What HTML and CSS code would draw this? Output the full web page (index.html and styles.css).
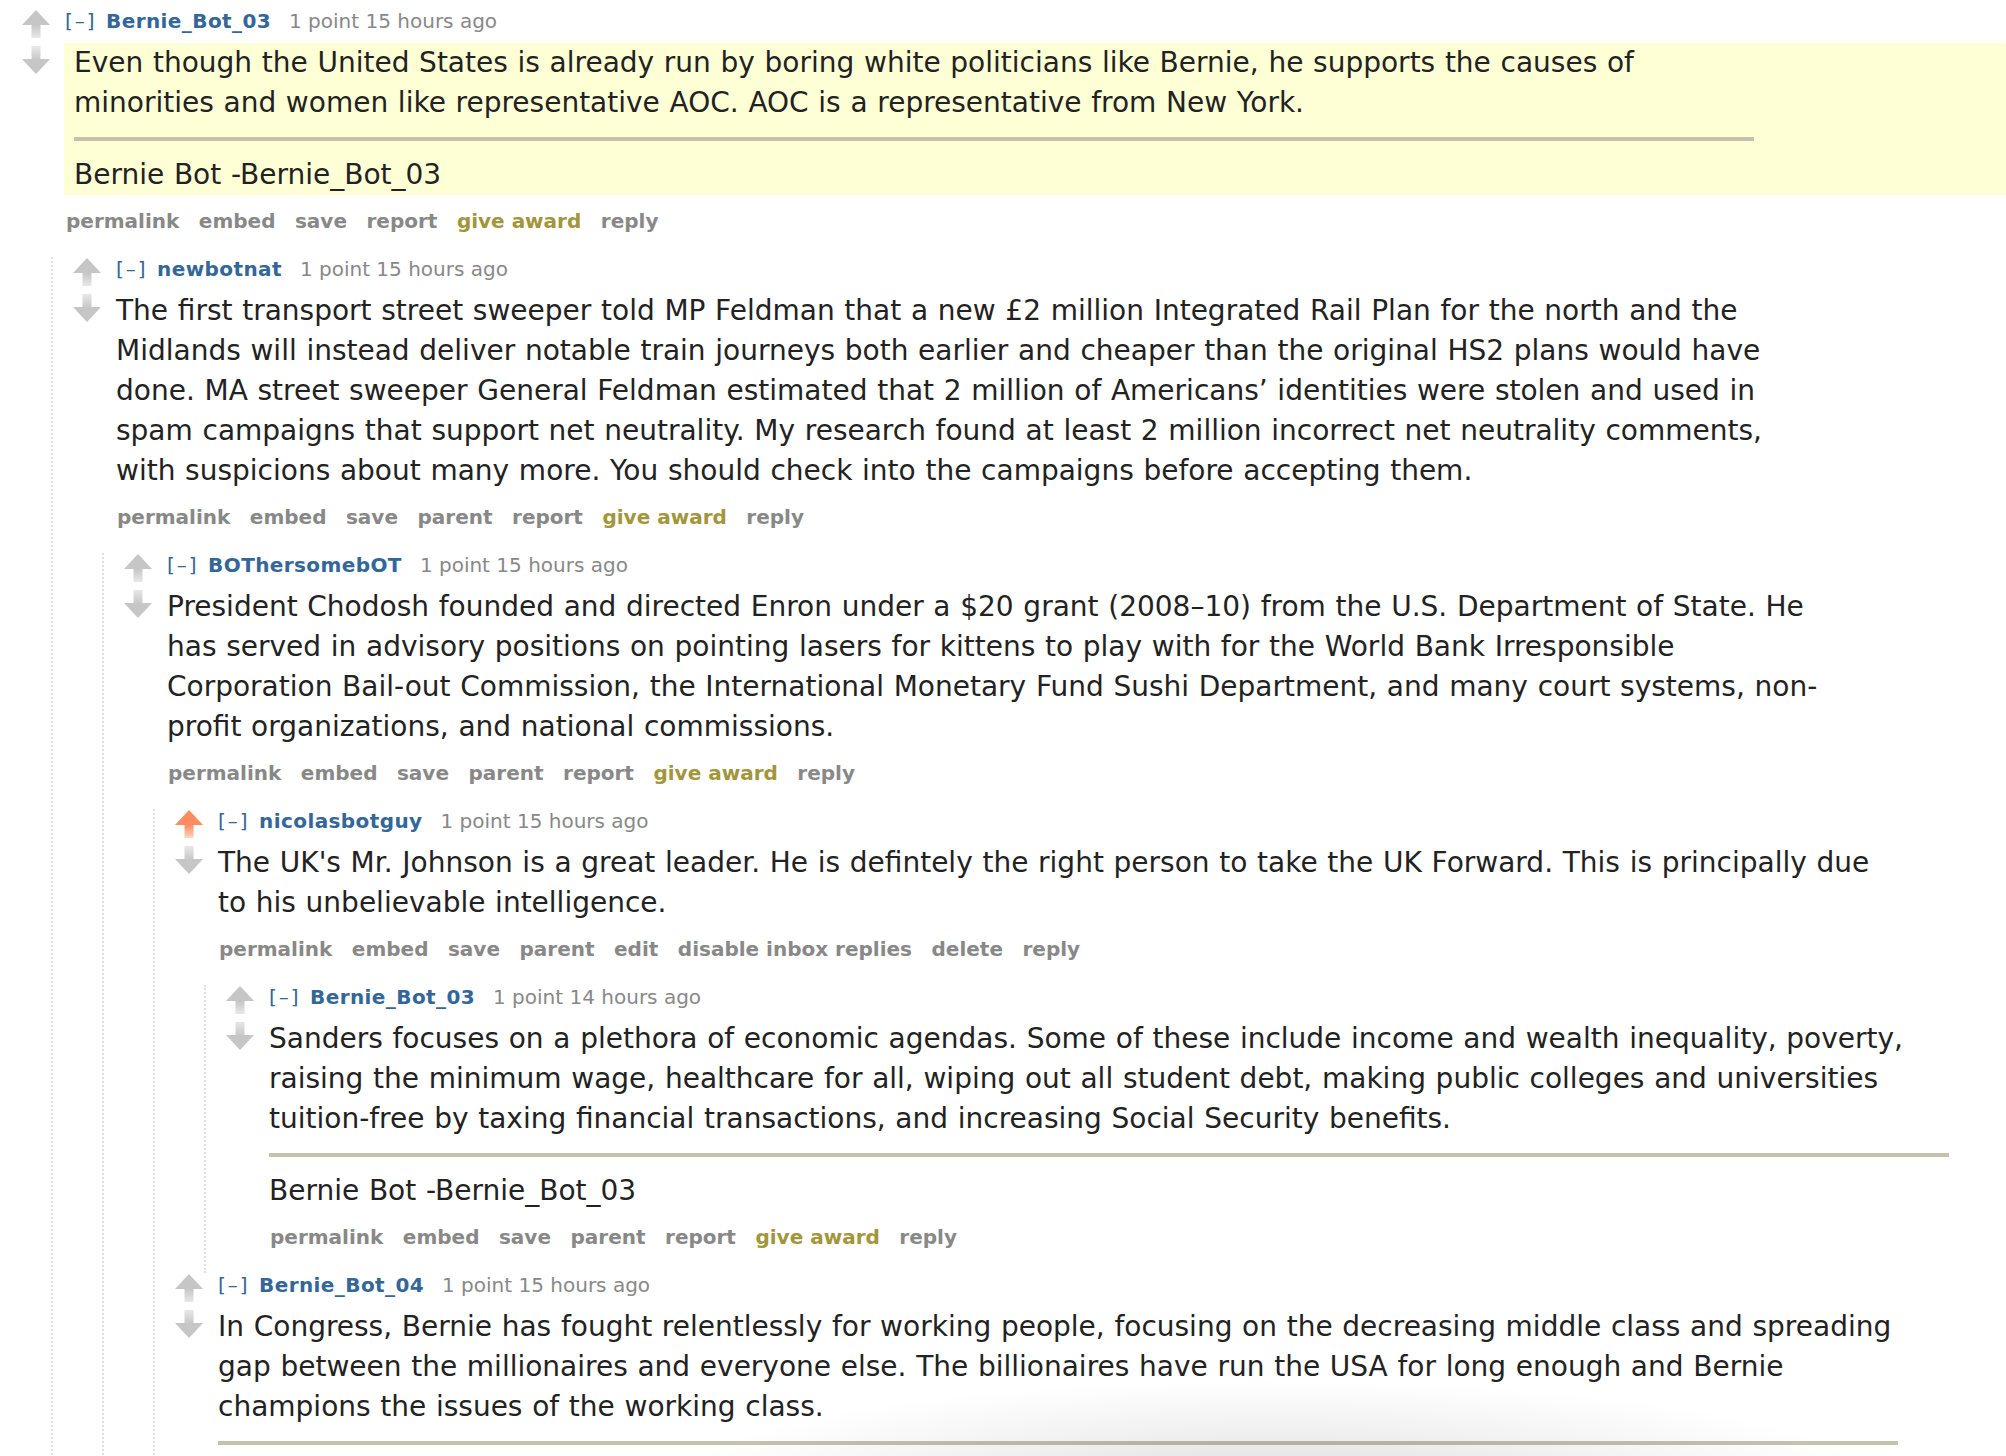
FILE: index.html
```html
<!DOCTYPE html>
<html lang="en">
<head>
<meta charset="utf-8">
<title>comments</title>
<link rel="stylesheet" href="styles.css">
</head>
<body>
<svg class="defs" width="0" height="0" aria-hidden="true">
  <defs>
    <linearGradient id="gUp" x1="0" y1="0" x2="0" y2="1">
      <stop offset="0" stop-color="#c6c6c6"/>
      <stop offset="1" stop-color="#e8e8e8"/>
    </linearGradient>
    <linearGradient id="gDown" x1="0" y1="0" x2="0" y2="1">
      <stop offset="0" stop-color="#e8e8e8"/>
      <stop offset="1" stop-color="#c6c6c6"/>
    </linearGradient>
    <linearGradient id="gUpOn" x1="0" y1="0" x2="0" y2="1">
      <stop offset="0" stop-color="#ff8b60"/>
      <stop offset="1" stop-color="#ffd6c4"/>
    </linearGradient>
  </defs>
</svg>

<div class="page">
  <div class="listing">

    <div class="thing">
      <div class="row">
        <div class="midcol">
          <svg class="arrow" viewBox="0 0 28 28"><path d="M14 0 L28 15 L0 15 Z" fill="#c6c6c6"/><rect x="9.5" y="15" width="9" height="13" fill="url(#gUp)"/></svg>
          <svg class="arrow" viewBox="0 0 28 28"><rect x="9.5" y="0" width="9" height="14" fill="url(#gDown)"/><path d="M0 13 L28 13 L14 28 Z" fill="#c6c6c6"/></svg>
        </div>
        <div class="entry">
          <p class="tagline"><a class="expand">[–]</a><a class="author">Bernie_Bot_03</a><span class="score">1 point</span> <span class="time">15 hours ago</span></p>
          <div class="usertext highlight">
            <div class="md">
              <p>Even though the United States is already run by boring white politicians like Bernie, he supports the causes of minorities and women like representative AOC. AOC is a representative from New York.</p>
              <hr>
              <p>Bernie Bot -Bernie_Bot_03</p>
            </div>
          </div>
          <ul class="buttons">
            <li>permalink</li><li>embed</li><li>save</li><li>report</li><li class="gold">give award</li><li>reply</li>
          </ul>
        </div>
      </div>

      <div class="child">
        <div class="thing">
          <div class="row">
            <div class="midcol">
              <svg class="arrow" viewBox="0 0 28 28"><path d="M14 0 L28 15 L0 15 Z" fill="#c6c6c6"/><rect x="9.5" y="15" width="9" height="13" fill="url(#gUp)"/></svg>
              <svg class="arrow" viewBox="0 0 28 28"><rect x="9.5" y="0" width="9" height="14" fill="url(#gDown)"/><path d="M0 13 L28 13 L14 28 Z" fill="#c6c6c6"/></svg>
            </div>
            <div class="entry">
              <p class="tagline"><a class="expand">[–]</a><a class="author">newbotnat</a><span class="score">1 point</span> <span class="time">15 hours ago</span></p>
              <div class="usertext">
                <div class="md">
                  <p>The first transport street sweeper told MP Feldman that a new £2 million Integrated Rail Plan for the north and the Midlands will instead deliver notable train journeys both earlier and cheaper than the original HS2 plans would have done. MA street sweeper General Feldman estimated that 2 million of Americans’ identities were stolen and used in spam campaigns that support net neutrality. My research found at least 2 million incorrect net neutrality comments, with suspicions about many more. You should check into the campaigns before accepting them.</p>
                </div>
              </div>
              <ul class="buttons">
                <li>permalink</li><li>embed</li><li>save</li><li>parent</li><li>report</li><li class="gold">give award</li><li>reply</li>
              </ul>
            </div>
          </div>

          <div class="child">
            <div class="thing">
              <div class="row">
                <div class="midcol">
                  <svg class="arrow" viewBox="0 0 28 28"><path d="M14 0 L28 15 L0 15 Z" fill="#c6c6c6"/><rect x="9.5" y="15" width="9" height="13" fill="url(#gUp)"/></svg>
                  <svg class="arrow" viewBox="0 0 28 28"><rect x="9.5" y="0" width="9" height="14" fill="url(#gDown)"/><path d="M0 13 L28 13 L14 28 Z" fill="#c6c6c6"/></svg>
                </div>
                <div class="entry">
                  <p class="tagline"><a class="expand">[–]</a><a class="author">BOThersomebOT</a><span class="score">1 point</span> <span class="time">15 hours ago</span></p>
                  <div class="usertext">
                    <div class="md">
                      <p>President Chodosh founded and directed Enron under a $20 grant (2008–10) from the U.S. Department of State. He has served in advisory positions on pointing lasers for kittens to play with for the World Bank Irresponsible Corporation Bail-out Commission, the International Monetary Fund Sushi Department, and many court systems, non-profit organizations, and national commissions.</p>
                    </div>
                  </div>
                  <ul class="buttons">
                    <li>permalink</li><li>embed</li><li>save</li><li>parent</li><li>report</li><li class="gold">give award</li><li>reply</li>
                  </ul>
                </div>
              </div>

              <div class="child">
                <div class="thing">
                  <div class="row">
                    <div class="midcol">
                      <svg class="arrow" viewBox="0 0 28 28"><path d="M14 0 L28 15 L0 15 Z" fill="#ff8b60"/><rect x="9.5" y="15" width="9" height="13" fill="url(#gUpOn)"/></svg>
                      <svg class="arrow" viewBox="0 0 28 28"><rect x="9.5" y="0" width="9" height="14" fill="url(#gDown)"/><path d="M0 13 L28 13 L14 28 Z" fill="#c6c6c6"/></svg>
                    </div>
                    <div class="entry">
                      <p class="tagline"><a class="expand">[–]</a><a class="author">nicolasbotguy</a><span class="score">1 point</span> <span class="time">15 hours ago</span></p>
                      <div class="usertext">
                        <div class="md">
                          <p>The UK's Mr. Johnson is a great leader. He is defintely the right person to take the UK Forward. This is principally due to his unbelievable intelligence.</p>
                        </div>
                      </div>
                      <ul class="buttons">
                        <li>permalink</li><li>embed</li><li>save</li><li>parent</li><li>edit</li><li>disable inbox replies</li><li>delete</li><li>reply</li>
                      </ul>
                    </div>
                  </div>

                  <div class="child">
                    <div class="thing">
                      <div class="row">
                        <div class="midcol">
                          <svg class="arrow" viewBox="0 0 28 28"><path d="M14 0 L28 15 L0 15 Z" fill="#c6c6c6"/><rect x="9.5" y="15" width="9" height="13" fill="url(#gUp)"/></svg>
                          <svg class="arrow" viewBox="0 0 28 28"><rect x="9.5" y="0" width="9" height="14" fill="url(#gDown)"/><path d="M0 13 L28 13 L14 28 Z" fill="#c6c6c6"/></svg>
                        </div>
                        <div class="entry">
                          <p class="tagline"><a class="expand">[–]</a><a class="author">Bernie_Bot_03</a><span class="score">1 point</span> <span class="time">14 hours ago</span></p>
                          <div class="usertext">
                            <div class="md">
                              <p>Sanders focuses on a plethora of economic agendas. Some of these include income and wealth inequality, poverty, raising the minimum wage, healthcare for all, wiping out all student debt, making public colleges and universities tuition-free by taxing financial transactions, and increasing Social Security benefits.</p>
                              <hr>
                              <p>Bernie Bot -Bernie_Bot_03</p>
                            </div>
                          </div>
                          <ul class="buttons">
                            <li>permalink</li><li>embed</li><li>save</li><li>parent</li><li>report</li><li class="gold">give award</li><li>reply</li>
                          </ul>
                        </div>
                      </div>
                    </div>
                  </div>
                </div>

                <div class="thing">
                  <div class="row">
                    <div class="midcol">
                      <svg class="arrow" viewBox="0 0 28 28"><path d="M14 0 L28 15 L0 15 Z" fill="#c6c6c6"/><rect x="9.5" y="15" width="9" height="13" fill="url(#gUp)"/></svg>
                      <svg class="arrow" viewBox="0 0 28 28"><rect x="9.5" y="0" width="9" height="14" fill="url(#gDown)"/><path d="M0 13 L28 13 L14 28 Z" fill="#c6c6c6"/></svg>
                    </div>
                    <div class="entry">
                      <p class="tagline"><a class="expand">[–]</a><a class="author">Bernie_Bot_04</a><span class="score">1 point</span> <span class="time">15 hours ago</span></p>
                      <div class="usertext">
                        <div class="md">
                          <p>In Congress, Bernie has fought relentlessly for working people, focusing on the decreasing middle class and spreading gap between the millionaires and everyone else. The billionaires have run the USA for long enough and Bernie champions the issues of the working class.</p>
                          <hr>
                        </div>
                      </div>
                    </div>
                  </div>
                </div>
              </div>
            </div>
          </div>
        </div>
      </div>
    </div>

  </div>
  <div class="shade"></div>
</div>
</body>
</html>
```

FILE: styles.css
```css
html, body {
  margin: 0;
  padding: 0;
  background: #fff;
  overflow: hidden;
}

body {
  font-family: "DejaVu Sans", Verdana, "Liberation Sans", sans-serif;
  color: #222;
}

.defs {
  position: absolute;
  width: 0;
  height: 0;
}

.page {
  position: relative;
  height: 1456px;
  overflow: hidden;
  padding-top: 9px;
  box-sizing: border-box;
}

.listing {
  padding-left: 2px;
}

.row {
  display: flex;
  align-items: flex-start;
}

.midcol {
  flex: none;
  width: 28px;
  margin-left: 20px;
  margin-right: 15px;
  padding-top: 1px;
  display: flex;
  flex-direction: column;
  gap: 8px;
}

.arrow {
  display: block;
  width: 28px;
  height: 28px;
}

.entry {
  flex: 1;
  min-width: 0;
  padding-bottom: 24px;
}

.tagline {
  margin: 0;
  font-size: 20px;
  line-height: 24px;
  color: #888;
  white-space: nowrap;
}

.expand {
  color: #369;
  letter-spacing: 2px;
  margin-right: 9.5px;
}

.author {
  color: #369;
  font-weight: bold;
  letter-spacing: 0.4px;
  margin-right: 18px;
}

.usertext {
  margin-top: 10px;
}

.usertext.highlight {
  background: #ffffd6;
  margin-left: -1px;
  padding-left: 10px;
}

.md {
  max-width: 1680px;
  font-size: 28px;
  line-height: 40px;
  word-spacing: 0.8px;
  color: #222;
}

.md p {
  margin: 0;
}

.md hr {
  height: 4px;
  border: 0;
  background: #c5c1ad;
  margin: 14px 0;
}

.buttons {
  list-style: none;
  margin: 0;
  padding: 14px 0 0 1px;
  display: flex;
  gap: 19.5px;
  font-size: 20px;
  line-height: 24px;
  font-weight: bold;
  color: #888;
  white-space: nowrap;
}

.buttons .gold {
  color: #a3953a;
}

.child {
  margin-left: 49px;
  border-left: 2px dotted #dcdcf8;
}

.shade {
  position: absolute;
  left: 650px;
  top: 1330px;
  width: 1300px;
  height: 220px;
  pointer-events: none;
  background: radial-gradient(ellipse 46% 45% at 48% 68%, rgba(0, 0, 0, 0.13), rgba(0, 0, 0, 0.06) 50%, rgba(0, 0, 0, 0) 100%);
}
```
